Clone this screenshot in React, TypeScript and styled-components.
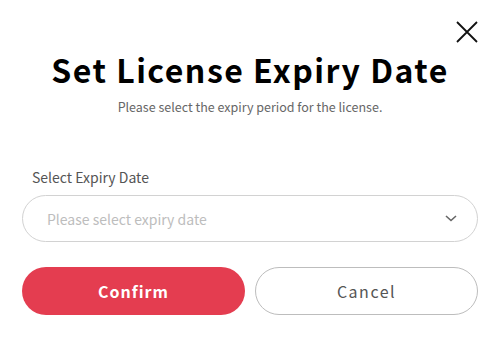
import React from "react";
import styled, { createGlobalStyle } from "styled-components";

const Global = createGlobalStyle`
  html, body { margin: 0; padding: 0; background: #fff; }
  body { font-family: "Noto Sans CJK SC", "Noto Sans", sans-serif; }
  * { box-sizing: border-box; }
`;

const Dialog = styled.div`
  position: relative;
  width: 495px;
  height: 353px;
  padding: 48px 17px 0 22px;
  display: flex;
  flex-direction: column;
`;

const CloseButton = styled.button`
  position: absolute;
  top: 20px;
  right: 16px;
  width: 24px;
  height: 24px;
  padding: 0;
  border: none;
  background: transparent;
  display: flex;
  align-items: center;
  justify-content: center;
  cursor: pointer;
`;

const Title = styled.h1`
  margin: 0;
  text-align: center;
  font-size: 32px;
  font-weight: 700;
  line-height: 42px;
  letter-spacing: 1.5px;
  color: #000;
`;

const Subtitle = styled.p`
  margin: 8px 0 0;
  text-align: center;
  font-size: 12.5px;
  line-height: 18px;
  color: #666;
`;

const Field = styled.div`
  margin-top: 51px;
  display: flex;
  flex-direction: column;
`;

const Label = styled.label`
  padding-left: 10px;
  font-size: 14px;
  line-height: 20px;
  color: #555;
`;

const Select = styled.div`
  margin-top: 8px;
  height: 47px;
  border: 1px solid #d2d2d2;
  border-radius: 24px;
  padding: 0 20px 0 24px;
  display: flex;
  align-items: center;
  justify-content: space-between;
`;

const Placeholder = styled.span`
  font-size: 14px;
  color: #bdbdbd;
`;

const Actions = styled.div`
  margin-top: 25px;
  display: grid;
  grid-template-columns: 1fr 1fr;
  gap: 10px;
`;

const Button = styled.button<{ $primary?: boolean }>`
  height: 48px;
  border-radius: 24px;
  font-family: inherit;
  font-size: 16px;
  cursor: pointer;
  letter-spacing: ${(p) => (p.$primary ? "1px" : "1.5px")};
  font-weight: ${(p) => (p.$primary ? 700 : 400)};
  color: ${(p) => (p.$primary ? "#fff" : "#555")};
  background: ${(p) => (p.$primary ? "#e43d50" : "#fff")};
  border: ${(p) => (p.$primary ? "none" : "1px solid #bdbdbd")};
`;

export default function App() {
  return (
    <>
      <Global />
      <Dialog>
        <CloseButton aria-label="Close">
          <svg width="22" height="22" viewBox="0 0 22 22">
            <path d="M1 1L21 21M21 1L1 21" stroke="#111" strokeWidth="1.8" fill="none" />
          </svg>
        </CloseButton>
        <Title>Set License Expiry Date</Title>
        <Subtitle>Please select the expiry period for the license.</Subtitle>
        <Field>
          <Label>Select Expiry Date</Label>
          <Select>
            <Placeholder>Please select expiry date</Placeholder>
            <svg width="12" height="7" viewBox="0 0 12 7">
              <path d="M1 1L6 5.5L11 1" stroke="#666" strokeWidth="1.6" fill="none" />
            </svg>
          </Select>
        </Field>
        <Actions>
          <Button $primary>Confirm</Button>
          <Button>Cancel</Button>
        </Actions>
      </Dialog>
    </>
  );
}
